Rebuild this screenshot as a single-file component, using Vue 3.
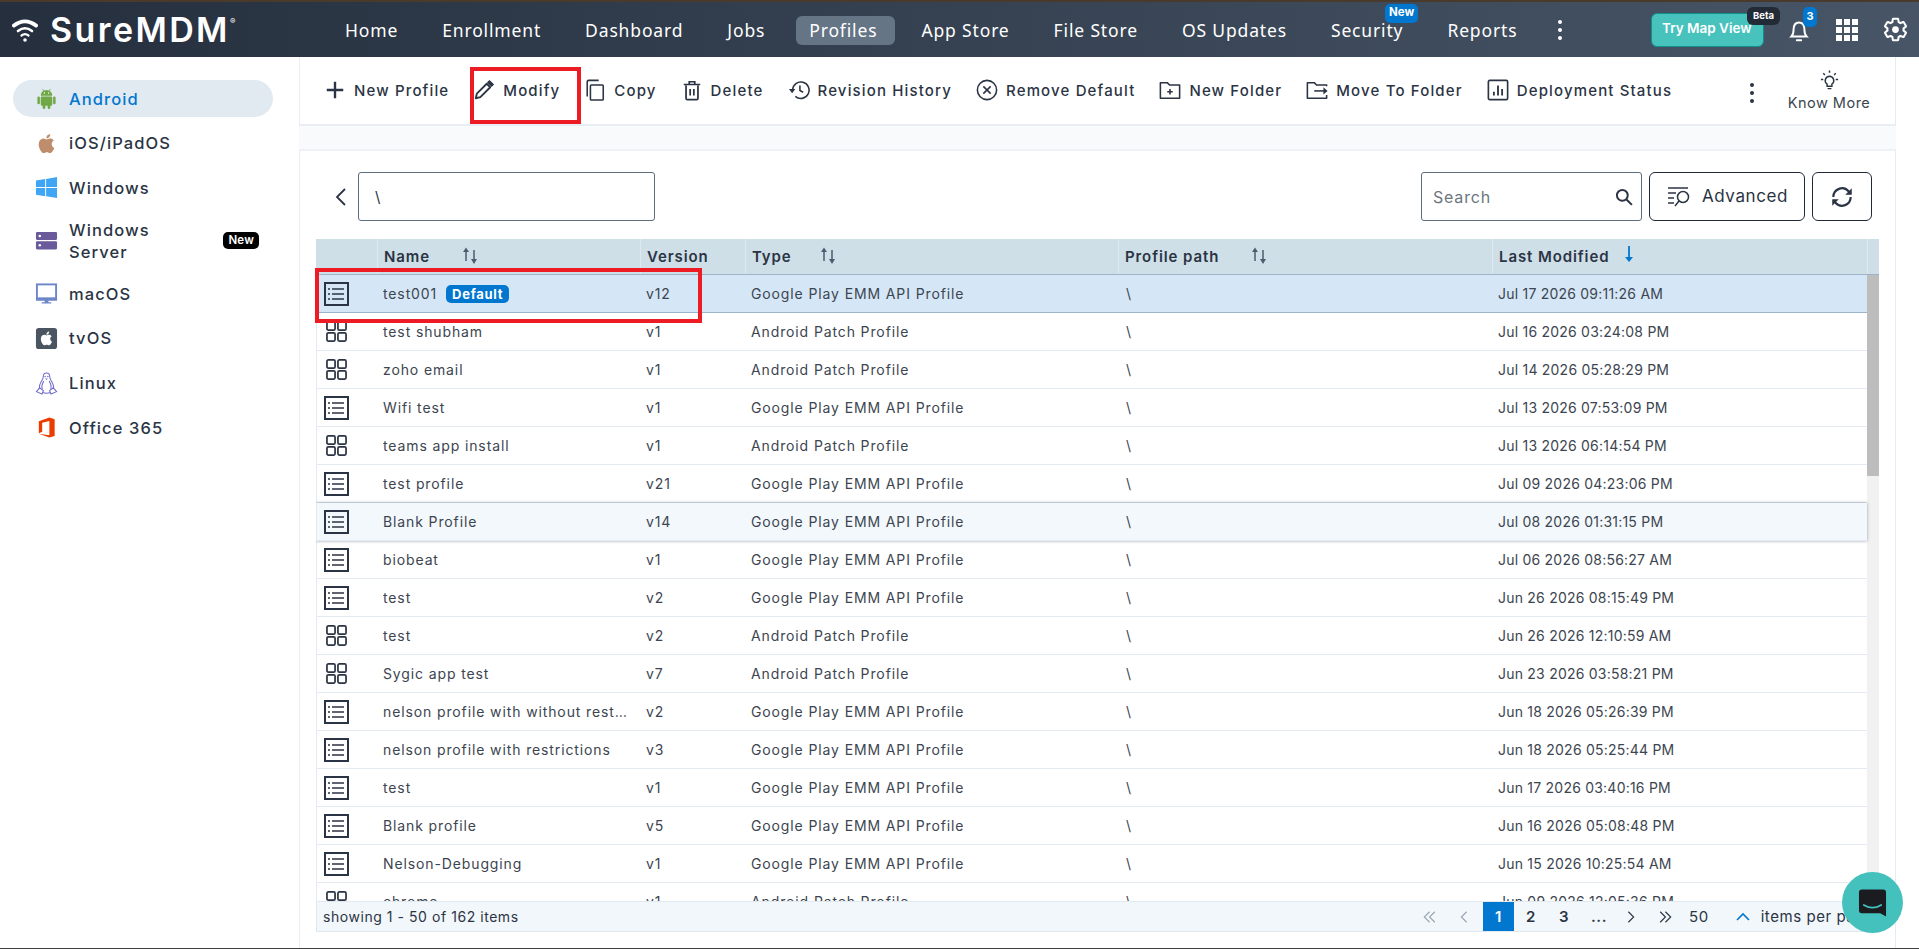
<template>
  <div class="app">
    <header class="topbar">
      <div class="brand">
        <svg class="wifi" viewBox="0 0 26 26" fill="none" stroke="#fff" stroke-linecap="round">
          <path d="M2 8.500C9 3 17 3 24 8.500" stroke-width="4" />
          <path d="M6 14C10.500 10.500 15.500 10.500 20 14" stroke-width="2.600" />
          <path d="M9.500 18.500C11.500 17 14.500 17 16.500 18.500" stroke-width="2.200" />
          <circle cx="13" cy="23" r="1.800" fill="#fff" stroke="none" />
        </svg>
        <span class="brand-name">SureMDM</span>
        <span class="reg">®</span>
      </div>
      <nav class="nav">
        <a v-for="item in navItems" :key="item" class="nav-item" :class="{ active: item === 'Profiles' }">
          {{ item }}
          <span v-if="item === 'Security'" class="nav-new">New</span>
        </a>
        <span class="nav-more"><i></i><i></i><i></i></span>
      </nav>
      <div class="top-right">
        <button class="map-btn">Try Map View<span class="beta">Beta</span></button>
        <span class="bell">
          <svg viewBox="0 0 24 24" fill="none" stroke="#fff" stroke-width="1.800">
            <path d="M5 18c1.500-1.500 2-3 2-6.500C7 7.500 9 5 12 5s5 2.500 5 6.500c0 3.500.5 5 2 6.500Z" />
            <path d="M10 21.500h4" stroke-linecap="round" />
          </svg>
          <span class="bell-count">3</span>
        </span>
        <span class="apps"><i v-for="n in 9" :key="n"></i></span>
        <svg class="gear" viewBox="0 0 24 24" fill="none" stroke="#fff" stroke-width="1.800">
          <path d="M19.140 12.940c.04-.3.06-.61.06-.94 0-.32-.02-.64-.07-.94l2.030-1.580a.49.49 0 0 0 .12-.61l-1.920-3.320a.488.488 0 0 0-.59-.22l-2.390.96c-.5-.38-1.030-.7-1.620-.94l-.36-2.540a.484.484 0 0 0-.48-.41h-3.840c-.24 0-.43.17-.47.41l-.36 2.540c-.59.24-1.130.57-1.620.94l-2.390-.96c-.22-.08-.47 0-.59.22L2.740 8.870c-.12.21-.08.47.12.61l2.030 1.580c-.05.3-.09.63-.09.94s.02.64.07.94l-2.030 1.580a.49.49 0 0 0-.12.61l1.920 3.320c.12.22.37.29.59.22l2.390-.96c.5.38 1.030.7 1.620.94l.36 2.540c.05.24.24.41.48.41h3.840c.24 0 .44-.17.47-.41l.36-2.540c.59-.24 1.130-.56 1.620-.94l2.390.96c.22.08.47 0 .59-.22l1.920-3.320c.12-.22.07-.47-.12-.61z" />
          <circle cx="12" cy="12" r="3" fill="#fff" stroke="none" />
        </svg>
      </div>
    </header>

    <div class="body">
      <aside class="sidebar">
        <div v-for="os in platforms" :key="os.name" class="side-item" :class="{ active: os.name === 'Android' }">
          <svg class="side-icon" viewBox="0 0 24 24" v-html="osIcons[os.icon]"></svg>
          <span class="side-label">{{ os.name }}</span>
          <span v-if="os.isNew" class="side-new">New</span>
        </div>
      </aside>

      <main class="content">
        <section class="toolbar">
          <div v-for="t in tools" :key="t.label" class="tool">
            <svg class="tool-icon" viewBox="0 0 24 24" fill="none" stroke="#2b3444" stroke-width="1.700" v-html="toolIcons[t.icon]"></svg>
            <span>{{ t.label }}</span>
          </div>
          <span class="tool-more"><i></i><i></i><i></i></span>
          <div class="know-more">
            <svg viewBox="0 0 24 24" fill="none" stroke="#2b3444" stroke-width="1.500">
              <path d="M12 7.500a4.500 4.500 0 0 0-2.500 8.200V18h5v-2.300A4.500 4.500 0 0 0 12 7.500Z" />
              <path d="M10 20.500h4M12 1.500v2.500M3 11h2.500M18.500 11H21M5.500 4.500l1.700 1.700M18.500 4.500l-1.700 1.700" />
            </svg>
            <span>Know More</span>
          </div>
          <span class="mark mark-modify"></span>
        </section>

        <section class="panel">
          <div class="panel-top">
            <svg class="back" viewBox="0 0 14 22" fill="none" stroke="#2b3444" stroke-width="1.800"><path d="M11 3 3 11l8 8" /></svg>
            <div class="path-box">\</div>
            <div class="search-box">
              <span>Search</span>
              <svg viewBox="0 0 24 24" fill="none" stroke="#2b3444" stroke-width="2.400"><circle cx="10" cy="10" r="6.500" /><path d="m15 15 6.500 6.500" /></svg>
            </div>
            <button class="adv-btn">
              <svg viewBox="0 0 26 24" fill="none" stroke="#2b3444" stroke-width="1.500">
                <path d="M2 4h20M2 9h8M2 14h6M2 19h6" />
                <circle cx="17" cy="13" r="5.500" />
                <path d="m13 17-4 5" />
              </svg>
              Advanced
            </button>
            <button class="refresh-btn">
              <svg viewBox="0 0 24 24" fill="none" stroke="#2b3444" stroke-width="2">
                <path d="M4 12a8 8 0 0 1 14-5.300L20 9" />
                <path d="M20 12a8 8 0 0 1-14 5.300L4 15" />
                <path d="M21 4v6h-6" fill="#2b3444" stroke="none" />
                <path d="M3 20v-6h6" fill="#2b3444" stroke="none" />
              </svg>
            </button>
          </div>

          <div class="table">
            <div class="thead">
              <div class="row-grid">
                <div class="th"></div>
                <div class="th">Name<svg class="sort sort-name" viewBox="0 0 18 20" v-html="sortIcon"></svg></div>
                <div class="th">Version</div>
                <div class="th">Type<svg class="sort sort-type" viewBox="0 0 18 20" v-html="sortIcon"></svg></div>
                <div class="th">Profile path<svg class="sort sort-path" viewBox="0 0 18 20" v-html="sortIcon"></svg></div>
                <div class="th">Last Modified
                  <svg class="sort sort-date" viewBox="0 0 18 20" fill="none" stroke="#0277d0" stroke-width="1.800"><path d="M9 2v15" /><path d="M5 13h8l-4 5z" fill="#0277d0" stroke="none" /></svg>
                </div>
              </div>
              <div class="th-end"></div>
            </div>

            <div class="tbody">
              <div class="rows">
                <div
                  v-for="(row, i) in rows"
                  :key="i"
                  class="row-grid row"
                  :class="{ selected: i === 0, hovered: i === 6 }"
                >
                  <div class="td icon-cell">
                    <svg v-if="row.type[0] === 'G'" class="kind" viewBox="0 0 25 24" fill="none" stroke="#2b3444">
                      <rect x="1" y="1" width="23" height="22" stroke-width="2" />
                      <path d="M8 7h12M8 12h12M8 17h12" stroke-width="1.600" />
                      <path d="M4 7h2M4 12h2M4 17h2" stroke-width="1.600" />
                    </svg>
                    <svg v-else class="kind-grid" viewBox="0 0 22 22" fill="none" stroke="#2b3444" stroke-width="1.800">
                      <rect x="1" y="1" width="8.500" height="8.500" rx="1.500" />
                      <rect x="12.500" y="1" width="8.500" height="8.500" rx="1.500" />
                      <rect x="1" y="12.500" width="8.500" height="8.500" rx="1.500" />
                      <rect x="12.500" y="12.500" width="8.500" height="8.500" rx="1.500" />
                    </svg>
                  </div>
                  <div class="td name-cell">
                    <span class="name-text">{{ row.name }}</span>
                    <span v-if="i === 0" class="default-tag">Default</span>
                  </div>
                  <div class="td">{{ row.version }}</div>
                  <div class="td">{{ row.type }}</div>
                  <div class="td path-cell">\</div>
                  <div class="td date-cell">{{ row.date }}</div>
                </div>
              </div>
              <div class="scroll"><div class="thumb"></div></div>
            </div>

            <div class="tfoot">
              <span class="showing">showing 1 - 50 of 162 items</span>
              <div class="pager">
                <svg class="pg pg-first" viewBox="0 0 16 16" fill="none" stroke="#9aa5b1" stroke-width="1.300"><path d="M7.500 2 1.500 8l6 6M13.500 2l-6 6 6 6" /></svg>
                <svg class="pg pg-prev" viewBox="0 0 16 16" fill="none" stroke="#9aa5b1" stroke-width="1.300"><path d="M11 2 5 8l6 6" /></svg>
                <span class="page current">1</span>
                <span class="page">2</span>
                <span class="page">3</span>
                <span class="page dots">...</span>
                <svg class="pg pg-next" viewBox="0 0 16 16" fill="none" stroke="#2b3444" stroke-width="1.300"><path d="m5 2 6 6-6 6" /></svg>
                <svg class="pg pg-last" viewBox="0 0 16 16" fill="none" stroke="#2b3444" stroke-width="1.300"><path d="m2.500 2 6 6-6 6M8.500 2l6 6-6 6" /></svg>
                <span class="per-count">50</span>
                <svg class="pg pg-up" viewBox="0 0 16 16" fill="none" stroke="#0277d0" stroke-width="1.600"><path d="m2 11 6-6 6 6" /></svg>
                <span class="per-label">items per page</span>
              </div>
            </div>
            <span class="mark mark-row"></span>
          </div>
        </section>
      </main>
    </div>
    <div class="bottom-line"></div>

    <div class="chat">
      <svg viewBox="0 0 30 30">
        <path d="M4 1h22a3 3 0 0 1 3 3v25l-6-3.500H4a3 3 0 0 1-3-3V4a3 3 0 0 1 3-3Z" fill="#1a1c20" />
        <path d="M6 17c5.500 3.500 12.500 3.500 18 0" fill="none" stroke="#45c1bd" stroke-width="1.800" stroke-linecap="round" />
      </svg>
    </div>
  </div>
</template>

<script setup>
const navItems = ['Home', 'Enrollment', 'Dashboard', 'Jobs', 'Profiles', 'App Store', 'File Store', 'OS Updates', 'Security', 'Reports']

const platforms = [
  { name: 'Android', icon: 'android' },
  { name: 'iOS/iPadOS', icon: 'apple' },
  { name: 'Windows', icon: 'windows' },
  { name: 'Windows Server', icon: 'server', isNew: true },
  { name: 'macOS', icon: 'monitor' },
  { name: 'tvOS', icon: 'tv' },
  { name: 'Linux', icon: 'linux' },
  { name: 'Office 365', icon: 'office' },
]

const applePath = 'M18.71 19.500C17.880 20.740 17 21.950 15.660 21.970C14.320 22 13.890 21.180 12.370 21.180C10.840 21.180 10.370 21.950 9.100 22C7.790 22.050 6.800 20.680 5.960 19.470C4.250 17 2.940 12.450 4.700 9.390C5.570 7.870 7.130 6.910 8.820 6.880C10.100 6.860 11.320 7.750 12.110 7.750C12.890 7.750 14.370 6.680 15.920 6.840C16.570 6.870 18.390 7.100 19.560 8.820C19.470 8.880 17.390 10.100 17.410 12.630C17.440 15.650 20.060 16.660 20.090 16.670C20.060 16.740 19.670 18.110 18.710 19.500M13 3.500C13.730 2.670 14.940 2.040 15.940 2C16.070 3.170 15.600 4.350 14.900 5.190C14.210 6.040 13.070 6.700 11.950 6.610C11.800 5.460 12.360 4.260 13 3.500Z'

const osIcons = {
  android: `<g fill="#6fa845"><path d="M6 9a6 6 0 0 1 12 0Z"/><rect x="6" y="10" width="12" height="9.500" rx="1.200"/><rect x="2.500" y="10" width="2.600" height="8" rx="1.300"/><rect x="18.900" y="10" width="2.600" height="8" rx="1.300"/><rect x="8" y="17" width="2.800" height="6" rx="1.400"/><rect x="13.200" y="17" width="2.800" height="6" rx="1.400"/></g><path d="M8 2l1.500 2.500M16 2l-1.500 2.500" stroke="#6fa845" stroke-width=".8"/><circle cx="9.800" cy="6.300" r=".7" fill="#fff"/><circle cx="14.200" cy="6.300" r=".7" fill="#fff"/>`,
  apple: `<path fill="#bd8d6c" d="${applePath}"/>`,
  windows: `<path fill="#3fa6f6" d="M1 4.600 10.600 3.100V11.500H1ZM11.600 3 23 1V11.500H11.600ZM1 12.500H10.600V21L1 19.500ZM11.600 12.500H23V23L11.600 21.100Z"/>`,
  server: `<rect x="1" y="3" width="22" height="8.500" rx="1.200" fill="#6a5a9b"/><rect x="1" y="12.800" width="22" height="8.500" rx="1.200" fill="#6a5a9b"/><circle cx="5" cy="7.200" r="1.300" fill="#fff"/><circle cx="5" cy="17" r="1.300" fill="#fff"/>`,
  monitor: `<rect x="2" y="2.500" width="20" height="14.500" fill="none" stroke="#6d87c9" stroke-width="2"/><path d="M1 17h22v2.500H1ZM10 19.500h4v1.500h3v1.500H7V21h3Z" fill="#6d87c9"/>`,
  tv: `<rect x="1" y="1" width="22" height="22" rx="3" fill="#4a5561"/><g transform="translate(3.300 3.200) scale(.72)"><path fill="#fff" d="${applePath}"/></g>`,
  linux: `<g fill="none" stroke="#6f6cc9" stroke-width="1.100"><path d="M12 1c-2.300 0-3.400 1.800-3.400 3.900 0 2.500-1 3.800-2.300 5.600C5 12.400 4.200 14.500 4.600 17.500M12 1c2.300 0 3.400 1.800 3.400 3.900 0 2.500 1 3.800 2.300 5.600 1.300 1.900 2.100 4 1.700 7"/><path d="M9.300 9.500c-1.800 2.300-2.600 5-1.800 8.500M14.700 9.500c1.800 2.300 2.600 5 1.800 8.500M8 21.500c2.500.8 5.500.8 8 0"/><path d="M4.800 16.500 1.500 20.500l5.800 2.500 1.500-3.500ZM19.200 16.500l3.300 4-5.800 2.500-1.500-3.500Z" fill="#fff"/></g><circle cx="10.600" cy="4.800" r=".8" fill="#6f6cc9"/><circle cx="13.400" cy="4.800" r=".8" fill="#6f6cc9"/><path d="M10.500 6.800h3L12 8.300Z" fill="#6f6cc9"/>`,
  office: `<path fill="#eb3c00" d="M4 5.500 15 1.500l5.500 1.800v17.500L15 22.500 4 18.500 15 20V5.300L7.500 7V16.500L4 18Z"/>`,
}

const tools = [
  { label: 'New Profile', icon: 'plus' },
  { label: 'Modify', icon: 'pencil' },
  { label: 'Copy', icon: 'copy' },
  { label: 'Delete', icon: 'trash' },
  { label: 'Revision History', icon: 'history' },
  { label: 'Remove Default', icon: 'remove' },
  { label: 'New Folder', icon: 'folderPlus' },
  { label: 'Move To Folder', icon: 'folderMove' },
  { label: 'Deployment Status', icon: 'chart' },
]

const toolIcons = {
  plus: `<path d="M12 3v18M3 12h18" stroke-width="2.600"/>`,
  pencil: `<path d="M3 21l1.200-5L15 5.200l3.800 3.800L8 19.800Z" stroke-width="2" stroke-linejoin="round"/><path d="M16.500 3.700l1.500-1.500 3.800 3.800-1.500 1.500Z" fill="#2b3444"/>`,
  copy: `<rect x="7" y="6.500" width="14" height="16.500" rx="1"/><path d="M3.500 19V3a1.500 1.500 0 0 1 1.500-1.500H16"/>`,
  trash: `<path d="M5.500 7v14a1.500 1.500 0 0 0 1.500 1.500h10a1.500 1.500 0 0 0 1.500-1.500V7M3 6h18M9 6V3h6v3M10 11v7M14 11v7" stroke-width="1.900"/>`,
  history: `<path d="M5 12a9 9 0 1 1 3 7"/><path d="M13 7v5.500l3.500 2"/><path d="M1 11h7l-3.500 4.500Z" fill="#2b3444" stroke="none"/>`,
  remove: `<circle cx="12" cy="12" r="10.500"/><path d="m8 8 8 8M16 8l-8 8"/>`,
  folderPlus: `<path d="M1.500 21V4h7.500l2.500 2.500h11V21Z" stroke-linejoin="round"/><path d="M12 11v6M9 14h6"/>`,
  folderMove: `<path d="M22.500 8V6.500H11.500L9 4H1.500v17h21v-3.500" stroke-linejoin="round"/><path d="M9 13h13"/><path d="M19 9l4.500 4-4.500 4Z" fill="#2b3444" stroke="none"/>`,
  chart: `<rect x="1.500" y="1.500" width="21" height="21" rx="1.500" stroke-width="1.800"/><path d="M7.500 18v-4M12 18V7M16.500 18v-7" stroke-width="2"/>`,
}

const sortIcon = `<g fill="none" stroke="#4b5d70" stroke-width="1.500"><path d="M5 5v10M13 4v11"/></g><path d="M2 6h6L5 1.500ZM10 13h6l-3 5Z" fill="#4b5d70"/>`

const playType = 'Google Play EMM API Profile'
const patchType = 'Android Patch Profile'

const rows = [
  { name: 'test001', version: 'v12', type: playType, date: 'Jul 17 2026 09:11:26 AM' },
  { name: 'test shubham', version: 'v1', type: patchType, date: 'Jul 16 2026 03:24:08 PM' },
  { name: 'zoho email', version: 'v1', type: patchType, date: 'Jul 14 2026 05:28:29 PM' },
  { name: 'Wifi test', version: 'v1', type: playType, date: 'Jul 13 2026 07:53:09 PM' },
  { name: 'teams app install', version: 'v1', type: patchType, date: 'Jul 13 2026 06:14:54 PM' },
  { name: 'test profile', version: 'v21', type: playType, date: 'Jul 09 2026 04:23:06 PM' },
  { name: 'Blank Profile', version: 'v14', type: playType, date: 'Jul 08 2026 01:31:15 PM' },
  { name: 'biobeat', version: 'v1', type: playType, date: 'Jul 06 2026 08:56:27 AM' },
  { name: 'test', version: 'v2', type: playType, date: 'Jun 26 2026 08:15:49 PM' },
  { name: 'test', version: 'v2', type: patchType, date: 'Jun 26 2026 12:10:59 AM' },
  { name: 'Sygic app test', version: 'v7', type: patchType, date: 'Jun 23 2026 03:58:21 PM' },
  { name: 'nelson profile with without restrictions', version: 'v2', type: playType, date: 'Jun 18 2026 05:26:39 PM' },
  { name: 'nelson profile with restrictions', version: 'v3', type: playType, date: 'Jun 18 2026 05:25:44 PM' },
  { name: 'test', version: 'v1', type: playType, date: 'Jun 17 2026 03:40:16 PM' },
  { name: 'Blank profile', version: 'v5', type: playType, date: 'Jun 16 2026 05:08:48 PM' },
  { name: 'Nelson-Debugging', version: 'v1', type: playType, date: 'Jun 15 2026 10:25:54 AM' },
  { name: 'chrome', version: 'v1', type: patchType, date: 'Jun 09 2026 12:05:36 PM' },
]
</script>

<style>
html,
body {
  margin: 0;
  background: #fff;
}
</style>

<style scoped>
.app {
  position: relative;
  display: flex;
  flex-direction: column;
  height: 949px;
  overflow: hidden;
  font-family: Inter, "Open Sans", sans-serif;
  color: #2b3444;
  background: #fff;
}

.topbar {
  display: flex;
  align-items: center;
  height: 57px;
  flex: none;
  box-sizing: border-box;
  border-top: 2px solid #4a3a2c;
  background: linear-gradient(90deg, #252f3e, #475566);
  color: #fff;
}

.brand {
  display: flex;
  align-items: flex-start;
  width: 330px;
  flex: none;
  padding-left: 12px;
  box-sizing: border-box;
}

.wifi {
  width: 26px;
  height: 26px;
  margin-top: 3px;
}

.brand-name {
  margin-left: 12px;
  font-size: 34px;
  line-height: 32px;
  font-weight: 600;
  letter-spacing: 2.400px;
}

.reg {
  font-size: 8px;
  margin-left: 0;
  line-height: 14px;
}

.nav {
  display: flex;
  align-items: center;
  margin-top: 1px;
  font-family: "Noto Sans", sans-serif;
  font-size: 17.500px;
  letter-spacing: 0.85px;
}

.nav-item {
  position: relative;
  padding: 3px 15px 4px;
  margin-right: 14px;
  border-radius: 6px;
  line-height: 22px;
  white-space: nowrap;
}

.nav-item.active {
  background: #657585;
  margin-left: 2px;
  margin-right: 11px;
  padding-left: 13px;
  padding-right: 18px;
}

.nav-new {
  position: absolute;
  left: 69px;
  top: -12px;
  padding: 0 4px;
  height: 19px;
  line-height: 17px;
  border-radius: 5px;
  background: #0277d0;
  font-family: Inter, sans-serif;
  font-size: 11.500px;
  font-weight: 700;
  letter-spacing: 0;
}

.nav-more,
.tool-more {
  display: flex;
  flex-direction: column;
  gap: 4px;
}

.nav-more {
  margin-left: 12px;
}

.nav-more i,
.tool-more i {
  width: 4px;
  height: 4px;
  border-radius: 50%;
  background: #fff;
}

.top-right {
  display: flex;
  align-items: center;
  margin-left: auto;
  padding-right: 10px;
}

.map-btn {
  position: relative;
  width: 113px;
  height: 34px;
  padding: 0 0 4px 10px;
  text-align: left;
  border: 1px solid #0e8f8c;
  border-radius: 6px;
  background: #48c2bd;
  color: #fff;
  font-family: Inter, sans-serif;
  font-size: 13.500px;
  font-weight: 600;
  white-space: nowrap;
}

.beta {
  position: absolute;
  right: -17px;
  top: -7px;
  width: 33px;
  height: 18px;
  line-height: 17px;
  text-align: center;
  border-radius: 6px;
  background: #222b35;
  font-size: 9.500px;
  font-weight: 700;
}

.bell {
  position: relative;
  width: 26px;
  height: 26px;
  margin-left: 22px;
}

.bell svg {
  width: 26px;
  height: 26px;
}

.bell-count {
  position: absolute;
  left: 17px;
  top: -10px;
  width: 14px;
  height: 20px;
  line-height: 19px;
  text-align: center;
  border-radius: 5px;
  background: #0277d0;
  font-size: 11px;
  font-weight: 700;
}

.apps {
  display: grid;
  grid-template-columns: repeat(3, 6px);
  gap: 2px;
  margin-left: 24px;
}

.apps i {
  width: 6px;
  height: 6px;
  background: #fff;
}

.gear {
  width: 27px;
  height: 27px;
  margin-left: 24px;
}

.body {
  display: flex;
  flex: 1;
  min-height: 0;
}

.sidebar {
  width: 299px;
  flex: none;
  box-sizing: border-box;
  padding: 23px 26px 0 13px;
  display: flex;
  flex-direction: column;
  gap: 7.600px;
}

.side-item {
  position: relative;
  display: flex;
  align-items: center;
  min-height: 37px;
  padding: 5px 0 5px 22px;
  box-sizing: border-box;
  border-radius: 19px;
  font-size: 16.500px;
  font-weight: 500;
  letter-spacing: 1.100px;
  line-height: 22px;
}

.side-item.active {
  background: #e1e9f1;
  color: #0277d0;
}

.side-icon {
  width: 23px;
  height: 23px;
  flex: none;
}

.side-label {
  margin-left: 11px;
  width: 110px;
}

.side-new {
  position: absolute;
  right: 14px;
  top: 18px;
  height: 17px;
  padding: 0 5px;
  line-height: 16px;
  border-radius: 5px;
  background: #000;
  color: #fff;
  font-size: 11.500px;
  font-weight: 600;
  letter-spacing: 0.2px;
}

.content {
  flex: 1;
  min-width: 0;
  display: flex;
  flex-direction: column;
  gap: 24px;
  box-sizing: border-box;
  padding-right: 23px;
  background: linear-gradient(90deg, #f8fafc 1597px, #fff 1597px);
}

.toolbar {
  position: relative;
  display: flex;
  align-items: center;
  height: 69px;
  flex: none;
  box-sizing: border-box;
  padding: 0 0 1px 24px;
  gap: 24px;
  background: #fff;
  border-left: 1px solid #e8eef4;
  border-right: 1px solid #e3ebf3;
  border-bottom: 2px solid #e8eef4;
  font-size: 15px;
  font-weight: 500;
  letter-spacing: 1.150px;
  white-space: nowrap;
}

.tool {
  display: flex;
  align-items: center;
  gap: 8px;
}

.tool-icon {
  width: 22px;
  height: 22px;
  flex: none;
}

.tool-more {
  margin: 6px 9px 0 auto;
}

.tool-more i {
  background: #2b3444;
}

.know-more {
  display: flex;
  flex-direction: column;
  align-items: center;
  width: 84px;
  margin: 0 24px 0 0;
  font-size: 14.500px;
  font-weight: 400;
  color: #3c4550;
  letter-spacing: 0.5px;
}

.know-more svg {
  width: 23px;
  height: 23px;
  margin-bottom: 2px;
}

.mark {
  position: absolute;
  box-sizing: border-box;
  border: 4px solid #ed1c24;
  pointer-events: none;
}

.mark-modify {
  left: 170px;
  top: 10px;
  width: 111px;
  height: 57px;
}

.mark-row {
  left: -1px;
  top: 29px;
  width: 387px;
  height: 55px;
}

.panel {
  flex: 1;
  min-height: 0;
  display: flex;
  flex-direction: column;
  gap: 18px;
  box-sizing: border-box;
  padding: 21px 16px 16px 16px;
  background: #fff;
  border-left: 1px solid #e8eef4;
  border-right: 1px solid #e3ebf3;
  border-top: 2px solid #eef2f6;
  margin-top: -1px;
}

.panel-top {
  display: flex;
  align-items: center;
  height: 49px;
  flex: none;
  padding-right: 7px;
}

.back {
  width: 14px;
  height: 22px;
  margin-left: 18px;
  margin-right: 10px;
}

.path-box,
.search-box,
.adv-btn,
.refresh-btn {
  height: 49px;
  box-sizing: border-box;
  border: 1px solid #5d6d7e;
  border-radius: 3px;
}

.path-box {
  width: 297px;
  padding-left: 16px;
  line-height: 47px;
  font-size: 15px;
}

.search-box {
  display: flex;
  align-items: center;
  justify-content: space-between;
  width: 221px;
  margin-left: auto;
  padding: 0 7px 0 11px;
  font-size: 16px;
  letter-spacing: 0.8px;
  color: #6c7680;
}

.search-box svg {
  width: 20px;
  height: 20px;
}

.adv-btn,
.refresh-btn {
  display: flex;
  align-items: center;
  justify-content: center;
  margin-left: 7px;
  background: #fff;
  border-color: #1f2937;
  border-radius: 6px;
  font-family: Inter, sans-serif;
  color: #2b3444;
}

.adv-btn {
  width: 156px;
  gap: 10px;
  font-size: 17px;
  letter-spacing: 0.6px;
  padding: 0 0 2px;
}

.adv-btn svg {
  width: 26px;
  height: 24px;
}

.refresh-btn {
  width: 60px;
}

.refresh-btn svg {
  width: 26px;
  height: 26px;
}

.table {
  position: relative;
  flex: 1;
  min-height: 0;
  display: flex;
  flex-direction: column;
  box-sizing: border-box;
  width: 1563px;
}

.row-grid {
  display: grid;
  grid-template-columns: 61px 263px 105px 373px 374px 375px;
  width: 1551px;
  box-sizing: border-box;
}

.thead {
  display: flex;
  height: 36px;
  flex: none;
  background: #cfdfe7;
  border-bottom: 1px solid #9db4c8;
  box-sizing: border-box;
}

.th {
  position: relative;
  display: flex;
  align-items: center;
  box-sizing: border-box;
  padding-left: 6px;
  border-left: 1px solid #dfe9ef;
  font-size: 15px;
  font-weight: 600;
  letter-spacing: 0.9px;
  white-space: nowrap;
}

.th:first-child {
  border-left: 0;
}

.th-end {
  flex: 1;
  border-left: 1px solid #dfe9ef;
}

.sort {
  position: absolute;
  width: 18px;
  height: 20px;
  top: 7px;
}

.sort-name {
  left: 83px;
}

.sort-type {
  left: 73px;
}

.sort-path {
  left: 131px;
}

.sort-date {
  left: 127px;
  top: 5px;
}

.tbody {
  display: flex;
  flex: 1;
  min-height: 0;
  overflow: hidden;
}

.rows {
  width: 1551px;
  flex: none;
  box-sizing: border-box;
}

.row {
  height: 38px;
  border-bottom: 1px solid #e3eaf1;
  border-left: 1px solid #e3eaf1;
}

.row.selected {
  background: #d5e7f6;
  border-bottom-color: #9db4c8;
}

.row.hovered {
  background: #f3f8fc;
  box-shadow: 0 0 3px rgba(70, 90, 110, 0.55);
  position: relative;
}

.td {
  display: flex;
  align-items: center;
  box-sizing: border-box;
  padding-left: 5px;
  font-size: 14px;
  letter-spacing: 0.88px;
  color: #3c4550;
  white-space: nowrap;
  overflow: hidden;
}

.icon-cell {
  padding-left: 7px;
}

.kind {
  width: 25px;
  height: 24px;
}

.kind-grid {
  width: 21px;
  height: 21px;
  margin-left: 2px;
}

.name-cell {
  gap: 9px;
  padding-right: 8px;
}

.name-text {
  overflow: hidden;
  text-overflow: ellipsis;
}

.default-tag {
  height: 18px;
  padding: 0 6px;
  line-height: 18px;
  border-radius: 5px;
  background: #0277d0;
  color: #fff;
  font-size: 13px;
  font-weight: 700;
  letter-spacing: 0.7px;
}

.path-cell {
  padding-left: 7px;
}

.date-cell {
  letter-spacing: 0.22px;
}

.scroll {
  width: 12px;
  flex: none;
  background: #f1f1f1;
}

.thumb {
  height: 201px;
  background: #bdbdbd;
}

.tfoot {
  display: flex;
  align-items: center;
  height: 31px;
  flex: none;
  box-sizing: border-box;
  padding-left: 6px;
  background: #f2f7fb;
  border: 1px solid #e1e9f0;
  font-size: 14px;
  letter-spacing: 0.55px;
  white-space: nowrap;
  overflow: hidden;
}

.pager {
  display: flex;
  align-items: center;
  height: 29px;
  margin-left: auto;
  width: 455px;
  flex: none;
  font-size: 15px;
}

.pg {
  width: 14px;
  height: 14px;
  flex: none;
}

.pg-first {
  margin-left: 0;
}

.pg-prev {
  margin-left: 20px;
}

.page {
  width: 32px;
  margin-left: 1px;
  text-align: center;
  line-height: 29px;
  font-weight: 600;
}

.page.current {
  width: 31px;
  margin-left: 12px;
  background: #0277d0;
  color: #fff;
}

.page.dots {
  width: 36px;
}

.pg-next {
  margin-left: 7px;
}

.pg-last {
  margin-left: 20px;
}

.per-count {
  margin-left: 17px;
  font-size: 15px;
}

.pg-up {
  margin-left: 26px;
  width: 16px;
  height: 16px;
}

.per-label {
  margin-left: 10px;
}

.bottom-line {
  height: 1px;
  flex: none;
  background: #3f3f3f;
}

.chat {
  position: absolute;
  right: 16px;
  bottom: 16px;
  display: flex;
  align-items: center;
  justify-content: center;
  width: 61px;
  height: 61px;
  border-radius: 50%;
  background: #45c1bd;
}

.chat svg {
  width: 29px;
  height: 32px;
}
</style>
